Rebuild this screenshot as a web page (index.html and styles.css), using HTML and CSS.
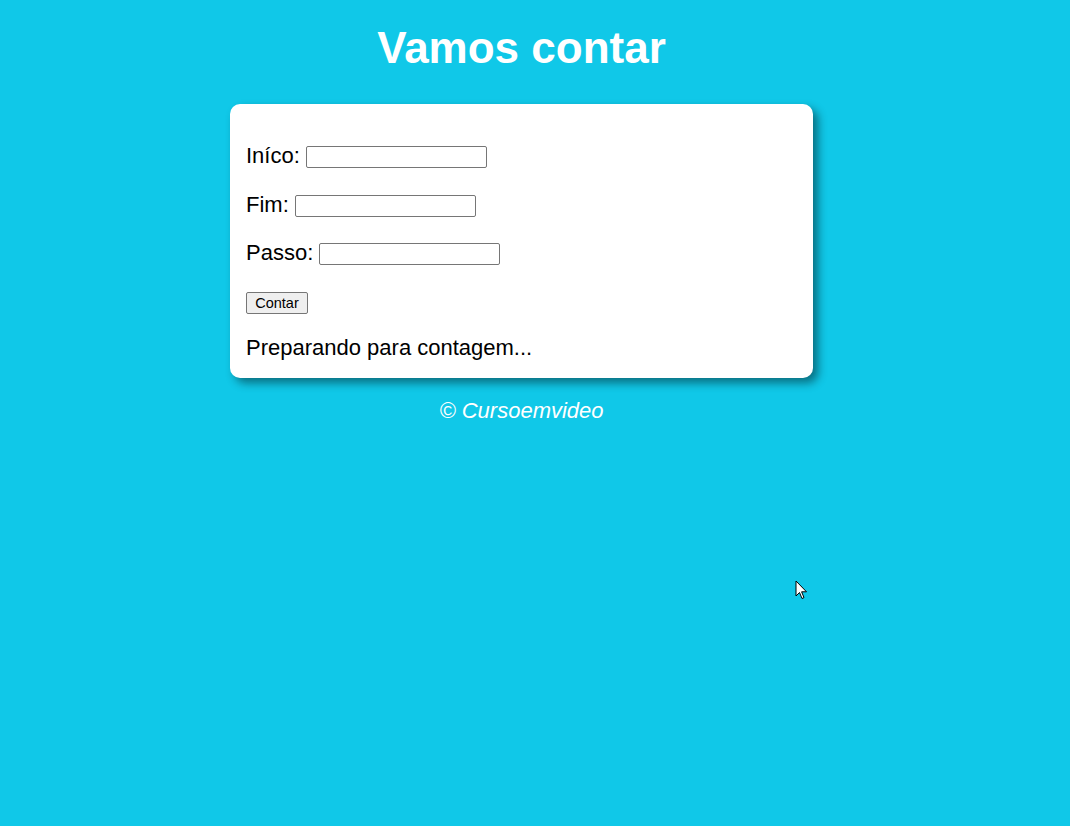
FILE: index.html
```html
<!DOCTYPE html>
<html lang="pt-BR">
<head>
<meta charset="utf-8">
<title>Vamos contar</title>
<link rel="stylesheet" href="styles.css">
</head>
<body>
<div class="page">
  <header class="head">
    <h1 class="title">Vamos contar</h1>
  </header>
  <section class="card">
    <div class="row"><label class="lbl">Iníco:</label><input class="field" type="number"></div>
    <div class="row"><label class="lbl">Fim:</label><input class="field" type="number"></div>
    <div class="row"><label class="lbl">Passo:</label><input class="field" type="number"></div>
    <div class="row"><button class="btn" type="button">Contar</button></div>
    <div class="result">Preparando para contagem...</div>
  </section>
  <footer class="foot">&copy; Cursoemvideo</footer>
</div>
<svg class="cursor" width="14" height="22" viewBox="0 0 14 22"><path d="M1 1 L1 16 L4.5 12.5 L7 18.5 L9 17.6 L6.6 11.8 L11.5 11.8 Z" fill="#fff" stroke="#000" stroke-width="1" stroke-linejoin="miter"/></svg>
</body>
</html>
```
FILE: styles.css
```css
* { box-sizing: border-box; }
html, body { margin: 0; padding: 0; }
body {
  background: #10c8e8;
  font-family: "Liberation Sans", Arial, sans-serif;
  height: 826px;
  overflow: hidden;
}
.page {
  width: 1043px;
  display: flex;
  flex-direction: column;
  align-items: center;
}
.head { padding-top: 22px; height: 104px; }
.title {
  margin: 0;
  color: #fff;
  font-size: 44px;
  font-weight: bold;
  line-height: 52px;
}
.card {
  width: 583px;
  height: 274px;
  background: #fff;
  border-radius: 10px;
  box-shadow: 5px 5px 10px rgba(0,0,0,0.45);
  padding: 42px 16px 0;
  display: flex;
  flex-direction: column;
  gap: 26.5px;
}
.row {
  display: flex;
  align-items: center;
  height: 22px;
  gap: 6px;
}
.lbl {
  font-size: 22px;
  color: #000;
  line-height: 22px;
  position: relative;
  top: -1px;
}
.field {
  width: 181px;
  height: 22px;
  border: 1px solid #767676;
  border-radius: 2px;
  background: #fff;
  margin: 0;
  padding: 1px 2px;
}
.btn {
  width: 62px;
  height: 22px;
  font-family: "Liberation Sans", Arial, sans-serif;
  font-size: 14.5px;
  background: #efefef;
  border: 1px solid #767676;
  border-radius: 2px;
  color: #000;
  padding: 0;
  margin: 0;
}
.result {
  font-size: 22px;
  line-height: 24px;
  margin-top: -4px;
  color: #000;
}
.foot {
  margin-top: 21px;
  color: #fff;
  font-style: italic;
  font-size: 22px;
  line-height: 24px;
}
.cursor {
  position: absolute;
  left: 795px;
  top: 580px;
}
```
